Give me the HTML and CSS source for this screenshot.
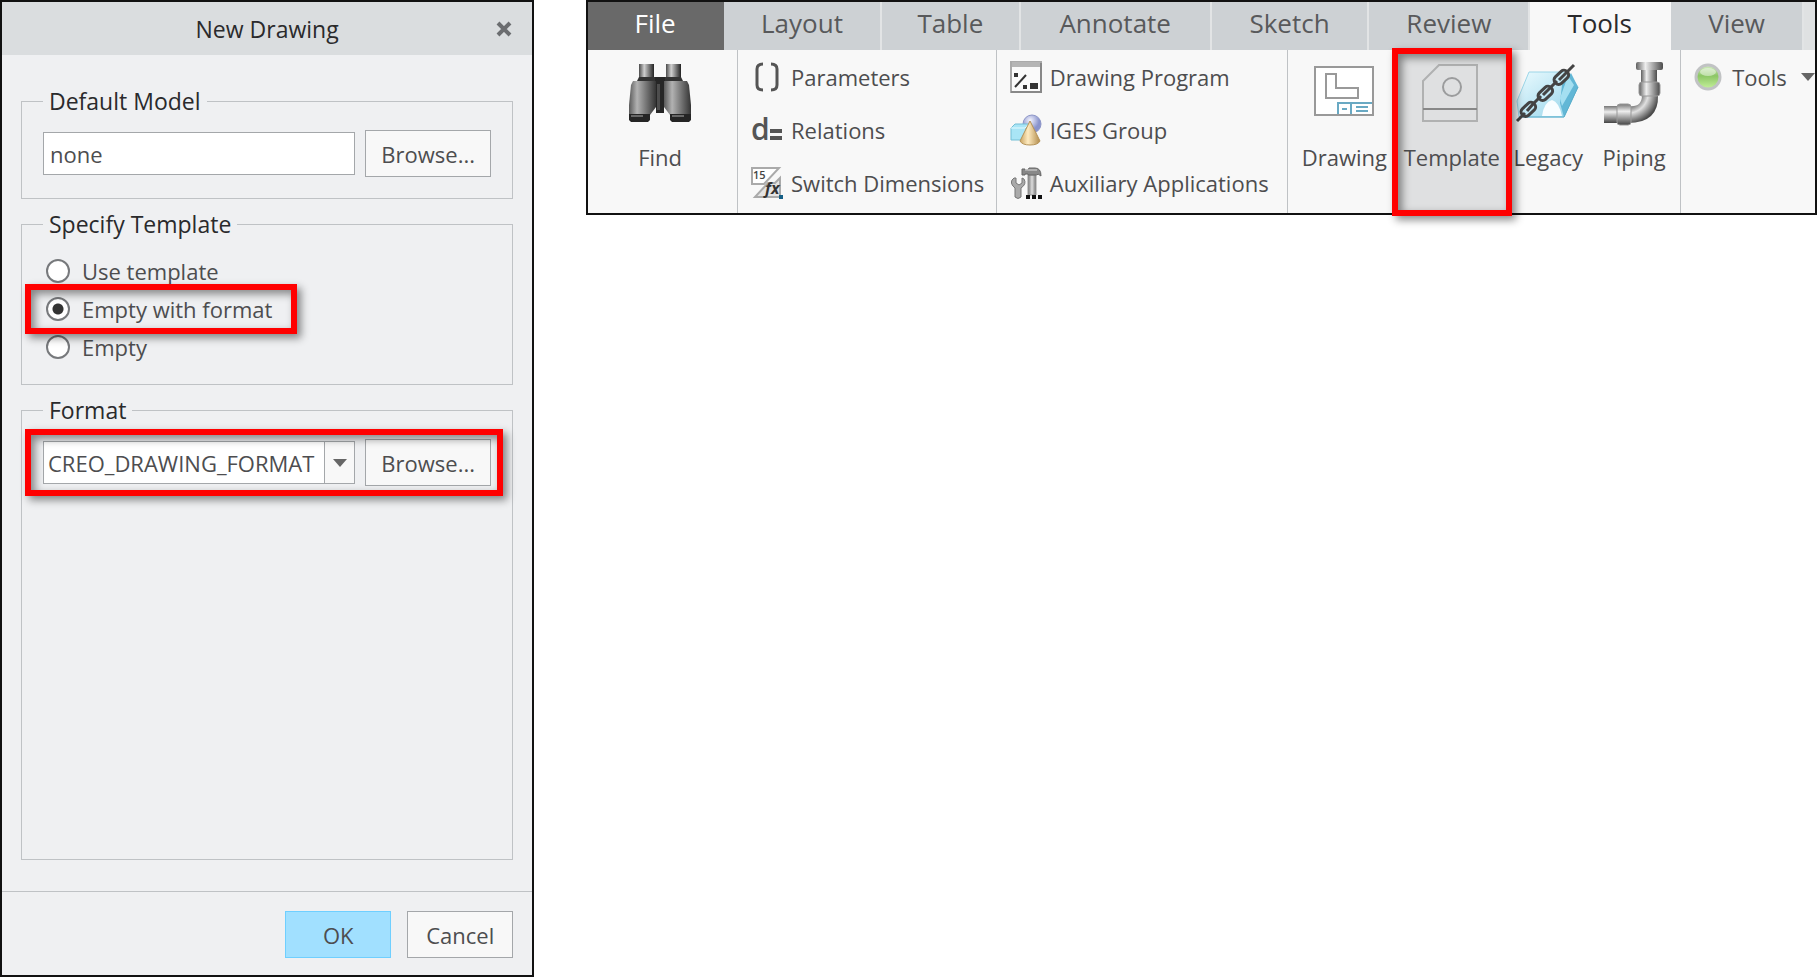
FILE: index.html
```html
<!DOCTYPE html>
<html lang="en">
<head>
    <meta charset="utf-8">
    <title>New Drawing</title>
    <link rel="stylesheet" href="styles.css">
</head>
<body>
    <form class="dialog">
        <header class="dialog-title">
            <h1>New Drawing</h1>
            <button type="button" class="close" aria-label="Close">
                <svg width="16" height="16" viewBox="0 0 16 16"><path d="M2 2L14 14M14 2L2 14" stroke="#6b6d70" stroke-width="4"/></svg>
            </button>
        </header>

        <div class="dialog-body">
            <fieldset>
                <legend>Default Model</legend>
                <div class="field-row">
                    <input type="text" class="text-box" value="none" aria-label="Default Model">
                    <button type="button" class="btn">Browse...</button>
                </div>
            </fieldset>

            <fieldset class="template-group">
                <legend>Specify Template</legend>
                <label class="option"><input type="radio" name="template">Use template</label>
                <label class="option highlight"><input type="radio" name="template" checked>Empty with format</label>
                <label class="option"><input type="radio" name="template">Empty</label>
            </fieldset>

            <fieldset class="format-group">
                <legend>Format</legend>
                <div class="field-row highlight">
                    <div class="combo">
                        <select aria-label="Format">
                            <option>CREO_DRAWING_FORMAT</option>
                        </select>
                        <span class="combo-arrow"><i class="caret"></i></span>
                    </div>
                    <button type="button" class="btn">Browse...</button>
                </div>
            </fieldset>
        </div>

        <footer class="dialog-footer">
            <button type="button" class="btn primary">OK</button>
            <button type="button" class="btn">Cancel</button>
        </footer>
    </form>

    <section class="ribbon">
        <nav class="tabs">
            <a href="#" class="file">File</a>
            <a href="#">Layout</a>
            <a href="#">Table</a>
            <a href="#">Annotate</a>
            <a href="#">Sketch</a>
            <a href="#">Review</a>
            <a href="#" class="active">Tools</a>
            <a href="#">View</a>
        </nav>

        <div class="groups">
            <div class="group find">
                <button class="tool-large">
                    <svg width="64" height="60" viewBox="0 0 64 60">
                        <defs>
                            <linearGradient id="barrel"><stop offset="0" stop-color="#5a5a5a"/><stop offset=".3" stop-color="#b2b2b2"/><stop offset=".7" stop-color="#6a6a6a"/><stop offset="1" stop-color="#343434"/></linearGradient>
                            <linearGradient id="eye"><stop offset="0" stop-color="#4a4a4a"/><stop offset=".35" stop-color="#cfcfcf"/><stop offset="1" stop-color="#222"/></linearGradient>
                        </defs>
                        <path d="M24 14H40V20H36V50H28V20H24Z" fill="#262626"/>
                        <rect x="29" y="21" width="3" height="26" fill="#4d4d4d"/>
                        <path d="M11 1H26V15H11Z" fill="url(#eye)"/>
                        <path d="M38 1H53V15H38Z" fill="url(#eye)"/>
                        <path d="M11 14H27V18H9ZM37 14H53L55 18H37Z" fill="#333"/>
                        <path d="M5 18H28V44L22 52H1V42L3 22Z" fill="url(#barrel)"/>
                        <path d="M36 18H59L61 22L63 42V52H42L36 44Z" fill="url(#barrel)"/>
                        <path d="M1 51H22V57L20 59H3L1 57ZM42 51H63V57L61 59H44L42 57Z" fill="#252525"/>
                        <path d="M3 53H15M44 53H56" stroke="#686868" stroke-width="2"/>
                    </svg>
                    <span>Find</span>
                </button>
            </div>

            <div class="group list">
                <button class="tool">
                    <svg width="32" height="32" viewBox="0 0 32 32" fill="none" stroke="#555" stroke-width="3"><path d="M12 3Q6 3 6 8V24Q6 29 12 29M20 3Q26 3 26 8V24Q26 29 20 29"/></svg>
                    Parameters
                </button>
                <button class="tool">
                    <svg width="32" height="32" viewBox="0 0 32 32"><text x="0" y="26" class="glyph-d">d</text><path d="M19 17H31M19 24H31" stroke="#555" stroke-width="4"/></svg>
                    Relations
                </button>
                <button class="tool">
                    <svg width="32" height="32" viewBox="0 0 32 32">
                        <path d="M1 1H28L13 17H1Z" fill="#fff" stroke="#aaa" stroke-width="2"/>
                        <path d="M29 11V30H4L17 16H24Z" fill="#e4e4e4" stroke="#aaa" stroke-width="2"/>
                        <text x="2" y="12" class="glyph-15">15</text>
                        <text x="14" y="27" class="glyph-fx">fx</text>
                        <rect x="28" y="28" width="4" height="4" fill="#155f86"/>
                    </svg>
                    Switch Dimensions
                </button>
            </div>

            <div class="group list">
                <button class="tool">
                    <svg width="32" height="32" viewBox="0 0 32 32">
                        <rect x="1" y="1" width="30" height="30" fill="#fafafa" stroke="#aaa" stroke-width="2"/>
                        <path d="M1 31H31V2" fill="none" stroke="#888" stroke-width="2"/>
                        <rect x="2" y="1" width="28" height="5" fill="#b5b5b5"/>
                        <path d="M5 26L16 14" stroke="#333" stroke-width="2"/>
                        <path d="M4 12H8V16H4ZM13 24H17V28H13ZM20 22H28V28H20Z" fill="#333"/>
                    </svg>
                    Drawing Program
                </button>
                <button class="tool">
                    <svg width="32" height="32" viewBox="0 0 32 32">
                        <defs>
                            <radialGradient id="ball" cx=".4" cy=".3"><stop offset="0" stop-color="#f4f5ff"/><stop offset="1" stop-color="#8993cc"/></radialGradient>
                            <linearGradient id="cone"><stop offset="0" stop-color="#c9a462"/><stop offset=".4" stop-color="#ffebc0"/><stop offset="1" stop-color="#b18b4b"/></linearGradient>
                        </defs>
                        <circle cx="22" cy="10" r="9" fill="url(#ball)" stroke="#8e97c8"/>
                        <path d="M1 14L5 10H19L16 14V26H1Z" fill="#a9e5f6" stroke="#75bfd6"/>
                        <path d="M1 14H15L19 10" fill="none" stroke="#e4faff"/>
                        <path d="M20 7L30 27Q28 31 20 31Q12 31 10 27Z" fill="url(#cone)" stroke="#b59256"/>
                    </svg>
                    IGES Group
                </button>
                <button class="tool">
                    <svg width="32" height="32" viewBox="0 0 32 32">
                        <defs><linearGradient id="steel"><stop offset="0" stop-color="#777"/><stop offset=".5" stop-color="#ddd"/><stop offset="1" stop-color="#777"/></linearGradient></defs>
                        <path d="M4 11L2 13Q0 17 5 21V30Q8 33 11 30V21Q17 17 14 12L12 11V16L9 18L6 16V11Z" fill="#aaa" stroke="#777"/>
                        <path d="M18 8H26V28H18Z" fill="url(#steel)" stroke="#999"/>
                        <path d="M12 2H15V3H18L19 1H25Q31 1 31 9Q28 6 26 8H18V7H15V8H12Z" fill="#888" stroke="#666"/>
                        <path d="M15 3H27" stroke="#ddd"/>
                        <path d="M16 28H20V32H16ZM22 28H26V32H22ZM28 28H32V32H28Z" fill="#111"/>
                    </svg>
                    Auxiliary Applications
                </button>
            </div>

            <div class="group apps">
                <button class="tool-large">
                    <svg width="60" height="60" viewBox="0 0 60 60" fill="none">
                        <rect x="1" y="4" width="58" height="48" fill="#fff" stroke="#999" stroke-width="2"/>
                        <path d="M12 11H22V25H44V35H12Z" stroke="#999" stroke-width="2"/>
                        <path d="M58 40H24V51M37 40V51M28 46H33M42 44H54M42 48H54" stroke="#69a9c3" stroke-width="2"/>
                    </svg>
                    <span>Drawing</span>
                </button>
                <button class="tool-large selected highlight">
                    <svg width="60" height="60" viewBox="0 0 60 60" fill="none" stroke="#9b9c9d">
                        <path d="M1 18L17 2H55V58H1Z" stroke-width="2" stroke-opacity=".7"/>
                        <path d="M1 46H55" stroke="#888" stroke-width="2"/>
                        <circle cx="30" cy="24" r="9" stroke-width="2"/>
                    </svg>
                    <span>Template</span>
                </button>
                <button class="tool-large">
                    <svg width="64" height="60" viewBox="0 0 64 60" fill="none">
                        <defs><linearGradient id="ice" x1="0" y1="0" x2="1" y2="1"><stop offset="0" stop-color="#ecfbff"/><stop offset="1" stop-color="#93d3e9"/></linearGradient></defs>
                        <path d="M13 9H52L62 24L48 54H3L1 38Z" fill="url(#ice)" stroke="#9cd6e8"/>
                        <path d="M46 22L55 10L62 24L48 54L44 40Z" fill="#62b7d6"/>
                        <path d="M52 13L58 22L46 43L44 35Z" fill="#a4dff1"/>
                        <path d="M26 53Q28 39 36 37Q43 39 46 53Z" fill="#f8fdff"/>
                        <path d="M3 54H48L62 24" stroke="#58acc9"/>
                        <g stroke="#444" stroke-width="3">
                            <path d="M1 58L9 50M51 9L58 2"/>
                            <rect x="-8" y="-4" width="16" height="9" rx="4" transform="translate(12 46) rotate(-43)"/>
                            <rect x="-8" y="-4" width="16" height="9" rx="4" transform="translate(29 30) rotate(-43)"/>
                            <rect x="-8" y="-4" width="16" height="9" rx="4" transform="translate(45 14) rotate(-43)"/>
                            <path d="M11 48L17 41M16 42L25 33M27 32L33 26M32 27L41 18M43 17L51 9"/>
                        </g>
                    </svg>
                    <span>Legacy</span>
                </button>
                <button class="tool-large">
                    <svg width="60" height="64" viewBox="0 0 60 64">
                        <defs>
                            <linearGradient id="pipe"><stop offset="0" stop-color="#606060"/><stop offset=".35" stop-color="#eee"/><stop offset="1" stop-color="#4c4c4c"/></linearGradient>
                            <linearGradient id="pipe-h" x2="0" y2="1"><stop offset="0" stop-color="#777"/><stop offset=".35" stop-color="#eee"/><stop offset="1" stop-color="#444"/></linearGradient>
                            <radialGradient id="elbow" gradientUnits="userSpaceOnUse" cx="24" cy="32" r="31"><stop offset=".4" stop-color="#666"/><stop offset=".65" stop-color="#e0e0e0"/><stop offset="1" stop-color="#4c4c4c"/></radialGradient>
                        </defs>
                        <path d="M38 34H54Q55 62 24 62V45Q38 47 38 34Z" fill="url(#elbow)"/>
                        <rect x="37" y="7" width="16" height="18" fill="url(#pipe)"/>
                        <rect x="32" y="1" width="27" height="8" rx="2" fill="url(#pipe)"/>
                        <rect x="35" y="21" width="21" height="14" rx="3" fill="url(#pipe)" stroke="#999"/>
                        <rect x="0" y="45" width="14" height="17" fill="url(#pipe-h)"/>
                        <rect x="13" y="43" width="14" height="21" rx="3" fill="url(#pipe-h)" stroke="#999"/>
                    </svg>
                    <span>Piping</span>
                </button>
            </div>

            <div class="group list more">
                <button class="tool">
                    <svg width="28" height="28" viewBox="0 0 28 28">
                        <defs><linearGradient id="lamp" x2="0" y2="1"><stop offset="0" stop-color="#d5edc5"/><stop offset=".45" stop-color="#8cc665"/><stop offset="1" stop-color="#c7f29c"/></linearGradient></defs>
                        <circle cx="14" cy="14" r="12" fill="url(#lamp)" stroke="#c1c3c4" stroke-width="3"/>
                        <ellipse cx="14" cy="9" rx="8" ry="4" fill="#fff" opacity=".45"/>
                    </svg>
                    Tools
                    <i class="caret"></i>
                </button>
            </div>
        </div>
    </section>
</body>
</html>
```

FILE: styles.css
```css
* {
    box-sizing: border-box;
}
body {
    margin: 0;
    min-height: 100vh;
    display: flex;
    align-items: stretch;
    gap: 52px;
    background: #fff;
    color: #4d4d4f;
    font-family: "Open Sans", "Noto Sans", sans-serif;
    font-size: 22px;
    line-height: 30px;
}
button, input, select {
    font: inherit;
    color: inherit;
}
button {
    padding: 0;
    border: none;
    background: none;
    white-space: nowrap;
}
svg {
    overflow: visible;
}

/* red callout frame */
.highlight {
    position: relative;
}
.highlight::after {
    content: "";
    position: absolute;
    z-index: 1;
    border: 6px solid #f00;
    box-shadow: 4px 4px 8px rgba(0, 0, 0, 0.45), inset 4px 4px 8px rgba(0, 0, 0, 0.45);
    pointer-events: none;
}

/* dialog */
.dialog {
    flex: 0 0 auto;
    width: 29.4%;
    display: flex;
    flex-direction: column;
    border: 2px solid #111;
    background: #eff0f2;
}
.dialog-title {
    display: grid;
    grid-template-columns: 1fr auto 1fr;
    align-items: center;
    height: 53px;
    padding: 0 20px;
    background: #dadddf;
}
.dialog-title h1 {
    grid-column: 2;
    margin: 0;
    font-size: 23px;
    font-weight: normal;
    color: #2a2a2c;
}
.close {
    justify-self: end;
    display: flex;
}
.dialog-body {
    flex: 1;
    display: flex;
    flex-direction: column;
    gap: 10px;
    padding: 31px 19px;
}
fieldset {
    min-width: 0;
    margin: 0;
    padding: 14px 21px 21px;
    border: 1px solid #bfc2c5;
}
legend {
    padding: 0 6px;
    font-size: 23px;
    color: #2a2a2c;
}
.format-group {
    flex: 1;
}
.field-row {
    display: flex;
    align-items: center;
    gap: 10px;
}
.field-row.highlight::after {
    inset: -10px -12px -10px -18px;
}
.text-box, .combo {
    flex: 1;
    min-width: 0;
    height: 43px;
    border: 1px solid #a4a7aa;
    background: #fff;
}
.text-box {
    padding: 0 6px;
}
.btn {
    width: 126px;
    height: 47px;
    border: 1px solid #a4a7aa;
    background: #f8f8f8;
}
.combo {
    position: relative;
}
.combo select {
    width: 100%;
    height: 100%;
    padding: 0 0 0 4px;
    border: none;
    background: none;
    appearance: none;
}
.combo-arrow {
    position: absolute;
    top: 0;
    right: 0;
    bottom: 0;
    width: 30px;
    display: flex;
    align-items: center;
    justify-content: center;
    border-left: 1px solid #a4a7aa;
    background: #f8f8f8;
    pointer-events: none;
}
.caret {
    border: 7px solid transparent;
    border-top: 8px solid #666;
    border-bottom: none;
}
.template-group {
    display: flex;
    flex-direction: column;
    align-items: flex-start;
    gap: 8px;
    padding-top: 17px;
    padding-bottom: 22px;
}
.option {
    display: flex;
    align-items: center;
    gap: 12px;
    padding-left: 3px;
}
.option.highlight::after {
    inset: -10px -25px -10px -18px;
}
.option input {
    width: 24px;
    height: 24px;
    margin: 0;
    appearance: none;
    border: 2px solid #77797c;
    border-radius: 50%;
    background: #fff;
}
.option input:checked {
    background: radial-gradient(circle, #333 5px, #fff 6px);
}
.dialog-footer {
    display: flex;
    justify-content: flex-end;
    gap: 16px;
    padding: 19px 19px 17px;
    border-top: 1px solid #bfc2c5;
}
.dialog-footer .btn {
    width: 106px;
}
.dialog-footer .primary {
    border-color: #6fcfff;
    background: #a1e0ff;
}

/* ribbon */
.ribbon {
    flex: 1;
    min-width: 0;
    align-self: flex-start;
    border: 2px solid #111;
    background: #f8f8f8;
}
.tabs {
    display: grid;
    grid-template-columns: 136fr 158fr 139fr 191fr 158fr 161fr 141fr 133fr 11fr;
    height: 48px;
    background: #dfe1e2;
    font-size: 26px;
}
.tabs a {
    padding-top: 6px;
    border-right: 2px solid #e2e4e5;
    background: #cdd1d4;
    color: #58595b;
    text-align: center;
    text-decoration: none;
}
.tabs .file {
    border-color: #696969;
    background: #696969;
    color: #fff;
}
.tabs .active {
    border-color: #f8f8f8;
    background: #f8f8f8;
    color: #2a2a2c;
}
.groups {
    display: grid;
    grid-template-columns: 150fr 259fr 291fr 394fr 134fr;
    height: 163px;
}
.group {
    min-width: 0;
    display: grid;
    border-right: 1px solid #bfc2c5;
}
.group:last-child {
    border-right: none;
}
.find {
    padding-right: 5px;
}
.list {
    align-content: start;
    justify-content: start;
    gap: 21px;
    padding: 11px 0 0 13px;
}
.tool {
    display: flex;
    align-items: center;
    gap: 8px;
    height: 32px;
}
.more .caret {
    margin-left: 4px;
}
.more .tool {
    gap: 10px;
}
.tool-large {
    display: flex;
    flex-direction: column;
    align-items: center;
    padding-top: 11px;
}
.tool-large svg {
    height: 64px;
}
.tool-large span {
    margin-top: 17px;
}
.apps {
    grid-template-columns: 106fr 109fr 84fr 88fr;
    padding: 0 2px 0 4px;
}
.selected {
    background: #dfe0e1;
}
.selected.highlight::after {
    inset: -2px -6px -3px -5px;
}
.glyph-d {
    font: 30px "Open Sans", sans-serif;
    font-weight: 600;
    fill: #555;
}
.glyph-15 {
    font: 11px "Open Sans", sans-serif;
    font-weight: 600;
    fill: #444;
}
.glyph-fx {
    font: italic 16px "Open Sans", sans-serif;
    font-weight: 700;
    fill: #333;
}
```
